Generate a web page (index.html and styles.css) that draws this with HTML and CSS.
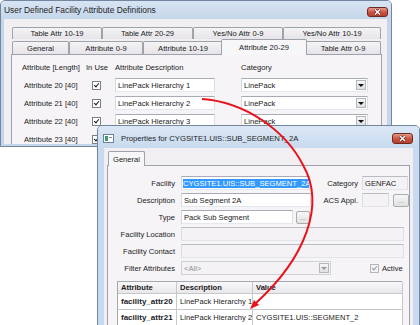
FILE: index.html
```html
<!DOCTYPE html>
<html lang="en">
<head>
    <meta charset="UTF-8">
    <meta name="viewport" content="width=device-width, initial-scale=1.0">
    <title>User Defined Facility Attribute Definitions</title>
    <link rel="stylesheet" href="styles.css">
</head>
<body>
    <div class="win defs">
        <div class="titlebar">
            <span class="title">User Defined Facility Attribute Definitions</span>
            <span class="close"><svg width="21" height="10" viewBox="0 0 21 10"><path d="M8 2.5 L13 7.5 M13 2.5 L8 7.5" stroke="#5a1a12" stroke-width="2.6"/><path d="M8 2.5 L13 7.5 M13 2.5 L8 7.5" stroke="#fff" stroke-width="1.5"/></svg></span>
        </div>
        <div class="client">
            <div class="tabs">
                <div class="tabrow back">
                    <span class="tab">Table Attr 10-19</span>
                    <span class="tab">Table Attr 20-29</span>
                    <span class="tab">Yes/No Attr 0-9</span>
                    <span class="tab">Yes/No Attr 10-19</span>
                </div>
                <div class="tabrow front">
                    <span class="tab">General</span>
                    <span class="tab">Attribute 0-9</span>
                    <span class="tab">Attribute 10-19</span>
                    <span class="tab sel">Attribute 20-29</span>
                    <span class="tab">Table Attr 0-9</span>
                </div>
            </div>
            <div class="page attrs">
                <span class="hd">Attribute [Length]</span>
                <span class="hd">In Use</span>
                <span class="hd">Attribute Description</span>
                <span class="hd">Category</span>

                <span class="name">Attribute 20 [40]</span>
                <span class="chk on"></span>
                <span class="edit">LinePack Hierarchy 1</span>
                <span class="combo"><span>LinePack</span><i class="drop"></i></span>

                <span class="name">Attribute 21 [40]</span>
                <span class="chk on"></span>
                <span class="edit">LinePack Hierarchy 2</span>
                <span class="combo"><span>LinePack</span><i class="drop"></i></span>

                <span class="name">Attribute 22 [40]</span>
                <span class="chk on"></span>
                <span class="edit">LinePack Hierarchy 3</span>
                <span class="combo"><span>LinePack</span><i class="drop"></i></span>

                <!-- last row sits under the properties window -->
                <span class="name">Attribute 23 [40]</span>
                <span class="chk on"></span>
                <span class="edit"></span>
                <span class="combo"><span></span><i class="drop"></i></span>
            </div>
        </div>
    </div>

    <div class="win props">
        <div class="titlebar">
            <svg class="appicon" width="11" height="9" viewBox="0 0 11 9"><rect x="0.5" y="0.5" width="10" height="8" fill="#fff" stroke="#6d819b"/><rect x="2" y="2" width="3" height="5" fill="#3f9a73"/><rect x="6" y="3" width="3" height="1" fill="#8a8a8a"/></svg>
            <span class="title">Properties for CYGSITE1.UIS::SUB_SEGMENT_2A</span>
            <span class="close"><svg width="21" height="11" viewBox="0 0 21 11"><path d="M8 3 L13 8 M13 3 L8 8" stroke="#5a1a12" stroke-width="2.6"/><path d="M8 3 L13 8 M13 3 L8 8" stroke="#fff" stroke-width="1.5"/></svg></span>
        </div>
        <div class="client">
            <div class="tabs">
                <div class="tabrow">
                    <span class="tab sel">General</span>
                </div>
            </div>
            <div class="page general">
                <div class="form">
                    <div class="frow">
                        <span class="lbl">Facility</span>
                        <span class="edit f-facility"><span class="picked">CYGSITE1.UIS::SUB_SEGMENT_2A</span></span>
                        <span class="lbl2 l-cat">Category</span>
                        <span class="edit ro f-cat">GENFAC</span>
                    </div>
                    <div class="frow">
                        <span class="lbl">Description</span>
                        <span class="edit f-desc">Sub Segment 2A</span>
                        <span class="lbl2 l-acs">ACS Appl.</span>
                        <span class="edit ro f-acs"></span>
                        <span class="dots b-acs">...</span>
                    </div>
                    <div class="frow">
                        <span class="lbl">Type</span>
                        <span class="edit f-type">Pack Sub Segment</span>
                        <span class="dots b-type">...</span>
                    </div>
                    <div class="frow">
                        <span class="lbl">Facility Location</span>
                        <span class="edit ro f-wide"></span>
                    </div>
                    <div class="frow">
                        <span class="lbl">Facility Contact</span>
                        <span class="edit ro f-wide"></span>
                    </div>
                    <div class="frow">
                        <span class="lbl">Filter Attributes</span>
                        <span class="combo off f-filter"><span>&lt;All&gt;</span><i class="drop"></i></span>
                        <span class="chk on off"></span>
                        <span class="active">Active</span>
                    </div>
                </div>
                <div class="agrid">
                    <span class="th">Attribute</span>
                    <span class="th">Description</span>
                    <span class="th">Value</span>

                    <span class="key">facility_attr20</span>
                    <span>LinePack Hierarchy 1</span>
                    <span></span>

                    <span class="key">facility_attr21</span>
                    <span>LinePack Hierarchy 2</span>
                    <span>CYGSITE1.UIS::SEGMENT_2</span>
                </div>
            </div>
        </div>
    </div>

    <svg class="arrow" width="420" height="325" viewBox="0 0 420 325">
        <path d="M202 99 C245 102 285 130 303 165 C326 205 305 258 256 303" fill="none" stroke="#e8131b" stroke-width="2"/>
        <polygon points="250,309 259,305 254,300" fill="#e8131b"/>
    </svg>
</body>
</html>
```

FILE: styles.css
```css
* {
    box-sizing: border-box;
}
body {
    margin: 0;
    width: 420px;
    height: 325px;
    overflow: hidden;
    position: relative;
    background: #fff;
    font-family: "Liberation Sans", Arial, sans-serif;
    font-size: 7.6px;
    color: #1b1b1b;
}

/* window chrome */
.win {
    position: absolute;
    display: flex;
    flex-direction: column;
    background: #c5d6eb;
    border: 1px solid #7386a0;
    border-radius: 5px 5px 0 0;
    overflow: hidden;
}
.defs {
    left: 0;
    top: 0;
    width: 392px;
    height: 147px;
}
.props {
    left: 97px;
    top: 125px;
    width: 323px;
    height: 210px;
    background: #c8daef;
}
.titlebar {
    flex: none;
    display: flex;
    align-items: center;
    background: linear-gradient(#d8e4f3, #c5d6eb);
}
.defs .titlebar {
    height: 18px;
    padding: 0 3px 0 3px;
}
.props .titlebar {
    height: 22px;
    padding: 3px 6px 0 5px;
    background: linear-gradient(#dbe7f5, #c8daef);
}
.title {
    flex: 1;
    color: #1e1e1e;
    white-space: nowrap;
}
.defs .title {
    font-size: 8.4px;
}
.props .title {
    font-size: 7.7px;
}
.appicon {
    margin-right: 7px;
}
.close {
    align-self: flex-start;
    width: 21px;
    border: 1px solid #6e2a22;
    border-radius: 3px;
    background: linear-gradient(#e79a8a, #c9523f 55%, #b9402e);
    display: flex;
}
.close svg {
    margin: -1px;
}
.defs .close {
    height: 10px;
    margin-top: 6px;
}
.props .close {
    height: 11px;
    margin-top: 4px;
}
.client {
    flex: 1;
    background: #f1eff2;
    overflow: hidden;
}
.defs .client {
    margin: 0 4px 2px 3px;
}
.props .client {
    margin: 0 6px;
}

/* tabs */
.tabrow {
    display: flex;
    align-items: flex-end;
}
.tab {
    display: flex;
    align-items: center;
    justify-content: center;
    border: 1px solid #9ea2aa;
    border-bottom: none;
    border-radius: 2px 2px 0 0;
    background: linear-gradient(#f4f3f5, #e6e4e8);
    white-space: nowrap;
}
.tab.sel {
    position: relative;
    z-index: 1;
    background: #f7f6f8;
}
.defs .tabs {
    margin: 8px 0 0 8px;
    width: 369px;
}
.back .tab {
    height: 12px;
}
.front .tab {
    height: 13px;
}
.back .tab:nth-child(1) { width: 90px; }
.back .tab:nth-child(2) { width: 91px; }
.back .tab:nth-child(3) { width: 90px; }
.back .tab:nth-child(4) { width: 98px; }
.front .tab:nth-child(1) { width: 57px; }
.front .tab:nth-child(2) { width: 74px; }
.front .tab:nth-child(3) { width: 80px; }
.front .tab.sel {
    width: 86px;
    height: 16px;
    margin: 0 -2px -1px;
}
.front .tab:nth-child(5) { width: 76px; }
.props .tabs {
    margin: 3px 0 0 4px;
}
.props .tab.sel {
    width: 37px;
    height: 15px;
    margin-bottom: -1px;
}

.page {
    border: 1px solid #9ea2aa;
    background: #f6f4f7;
}

/* attribute definitions page */
.attrs {
    margin-left: 7px;
    width: 371px;
    height: 120px;
    display: grid;
    grid-template-columns: 64px 29px 126px 127px;
    grid-template-rows: 13px repeat(4, 14px);
    row-gap: 4px;
    align-items: center;
    padding: 6px 0 0 10px;
}
.attrs .name {
    padding-left: 2px;
    white-space: nowrap;
}
.attrs .chk {
    margin-left: 6px;
}
.attrs .edit {
    width: 100px;
}
.hd {
    white-space: nowrap;
}

/* controls */
.edit {
    height: 14px;
    display: flex;
    align-items: center;
    padding: 0 2px;
    border: 1px solid #a9acb4;
    border-color: #a9acb4 #dadee5 #e3e8ef #d5d9e0;
    background: #fff;
    white-space: nowrap;
    overflow: hidden;
}
.edit.ro {
    background: #f4f2f5;
    border-color: #b9bcc3 #dcdfe4 #e1e4e9 #d9dce2;
}
.combo {
    height: 14px;
    display: flex;
    align-items: center;
    padding-left: 2px;
    border: 1px solid #a9acb4;
    border-color: #a9acb4 #dadee5 #e3e8ef #d5d9e0;
    background: #fff;
    white-space: nowrap;
}
.combo span {
    flex: 1;
}
.drop {
    width: 10px;
    height: 10px;
    margin-right: 1px;
    border: 1px solid #b3b6bd;
    background: linear-gradient(#f6f6f7, #dfe0e3);
    display: flex;
    align-items: center;
    justify-content: center;
}
.drop::after {
    content: "";
    border: 3px solid transparent;
    border-top: 3px solid #111;
    border-bottom: none;
}
.combo.off {
    background: #f4f2f5;
    border-color: #cfd1d6;
    color: #8e8e8e;
}
.combo.off .drop::after {
    border-top-color: #9a9a9a;
}
.chk {
    position: relative;
    width: 9px;
    height: 9px;
    border: 1px solid #7b7f87;
    background: #fff;
}
.chk.on::after {
    content: "";
    position: absolute;
    left: 2px;
    top: 0;
    width: 2px;
    height: 4px;
    border: solid #1a1a1a;
    border-width: 0 1.5px 1.5px 0;
    transform: rotate(40deg);
}
.chk.off {
    border-color: #b4b6ba;
    background: #f4f2f5;
}
.chk.off::after {
    border-color: #9b9b9b;
}
.dots {
    height: 13px;
    display: flex;
    align-items: center;
    justify-content: center;
    border: 1px solid #acacac;
    border-radius: 2px;
    background: linear-gradient(#f6f6f6, #e2e2e2);
    color: #8a8a8a;
    font-size: 7px;
}

/* properties page */
.general {
    margin-left: 3px;
    width: 303px;
    height: 200px;
    padding-top: 10px;
}
.form {
    display: flex;
    flex-direction: column;
    gap: 3px;
}
.frow {
    display: flex;
    align-items: center;
    height: 14px;
}
.lbl {
    width: 67px;
    margin-right: 6px;
    text-align: right;
    white-space: nowrap;
}
.lbl2 {
    text-align: right;
    margin-right: 4px;
    white-space: nowrap;
}
.f-facility {
    width: 129px;
    padding-left: 1px;
}
.picked {
    background: #3399ff;
    color: #fff;
    line-height: 9px;
}
.l-cat { width: 48px; }
.f-cat { width: 46px; }
.f-desc { width: 130px; }
.l-acs { width: 47px; }
.f-acs { width: 27px; }
.b-acs {
    width: 16px;
    margin-left: 4px;
}
.f-type { width: 112px; }
.b-type {
    width: 14px;
    margin-left: 3px;
}
.f-wide { width: 223px; }
.f-filter {
    width: 150px;
    margin-right: 39px;
}
.active {
    margin-left: 3px;
}

.agrid {
    display: grid;
    grid-template-columns: 59px 76px 150px;
    grid-template-rows: 12px;
    grid-auto-rows: 16px;
    width: 285px;
    margin: 6px 0 0 9px;
    border-top: 1px solid #a5a8ae;
    border-left: 1px solid #a5a8ae;
}
.agrid span {
    display: flex;
    align-items: center;
    padding-left: 3px;
    border-right: 1px solid #c6c8cc;
    border-bottom: 1px solid #c6c8cc;
    background: #fff;
    white-space: nowrap;
    overflow: hidden;
}
.agrid .th {
    background: linear-gradient(#f8f7f9, #e8e7ea);
    font-weight: bold;
}
.agrid .key {
    font-weight: bold;
    font-size: 8px;
}

.arrow {
    position: absolute;
    left: 0;
    top: 0;
    z-index: 5;
    pointer-events: none;
}
```
